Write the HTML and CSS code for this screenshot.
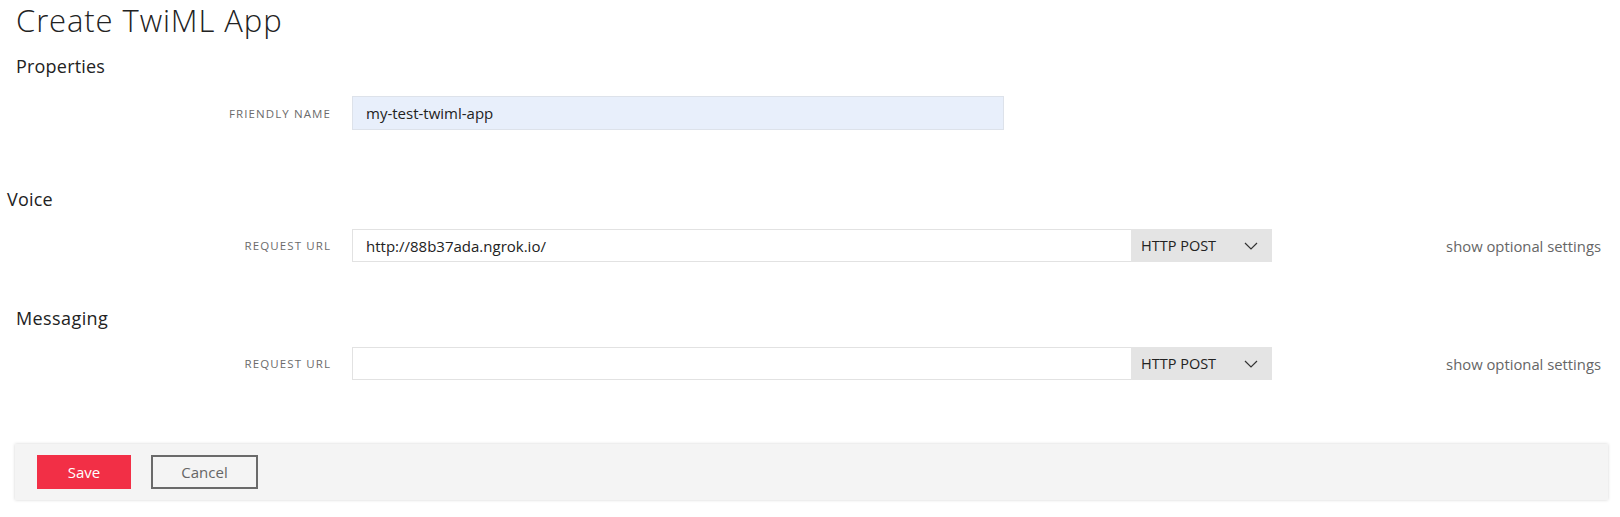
FILE: index.html
```html
<!DOCTYPE html>
<html>
<head>
<meta charset="utf-8">
<title>Create TwiML App</title>
<link rel="stylesheet" href="styles.css">
</head>
<body>
<div class="page">
  <h1 class="title">Create TwiML App</h1>

  <h2 class="section-title sec-properties">Properties</h2>
  <div class="row row-friendly">
    <label class="label">FRIENDLY NAME</label>
    <div class="field field-name">my-test-twiml-app</div>
  </div>

  <h2 class="section-title sec-voice">Voice</h2>
  <div class="row row-voice">
    <label class="label">REQUEST URL</label>
    <div class="url-group">
      <div class="field field-url">http://88b37ada.ngrok.io/</div>
      <div class="select">
        <span>HTTP POST</span>
        <svg class="chev" width="14" height="8" viewBox="0 0 14 8"><path d="M1 1 L7 7 L13 1" fill="none" stroke="#333" stroke-width="1.2"/></svg>
      </div>
    </div>
    <a class="optional">show optional settings</a>
  </div>

  <h2 class="section-title sec-messaging">Messaging</h2>
  <div class="row row-messaging">
    <label class="label">REQUEST URL</label>
    <div class="url-group">
      <div class="field field-url"></div>
      <div class="select">
        <span>HTTP POST</span>
        <svg class="chev" width="14" height="8" viewBox="0 0 14 8"><path d="M1 1 L7 7 L13 1" fill="none" stroke="#333" stroke-width="1.2"/></svg>
      </div>
    </div>
    <a class="optional">show optional settings</a>
  </div>

  <div class="footer">
    <button class="btn btn-save">Save</button>
    <button class="btn btn-cancel">Cancel</button>
  </div>
</div>
</body>
</html>
```

FILE: styles.css
```css
* { box-sizing: border-box; }
html, body { margin: 0; padding: 0; background: #fff; }
body {
  font-family: "Open Sans", "Noto Sans", sans-serif;
  color: #222;
  width: 1620px;
  height: 517px;
  overflow: hidden;
}
.page { display: flex; flex-direction: column; }

.title {
  margin: 0;
  padding-left: 16px;
  font-size: 31px;
  line-height: 40px;
  font-weight: 300;
  color: #222;
  letter-spacing: 0.9px;
}

.section-title {
  margin: 0;
  font-size: 18px;
  line-height: 24px;
  font-weight: 400;
  color: #222;
  letter-spacing: 0.2px;
}
.sec-properties { margin-top: 14px; padding-left: 16px; }
.sec-voice { margin-top: 57px; padding-left: 7px; }
.sec-messaging { margin-top: 44px; padding-left: 16px; letter-spacing: 0.4px; }

.row {
  display: grid;
  grid-template-columns: 331px auto 1fr;
  column-gap: 21px;
  align-items: center;
  height: 34px;
}
.row-friendly { margin-top: 18px; }
.row-voice { margin-top: 18px; height: 33px; }
.row-messaging { margin-top: 17px; height: 33px; }

.label {
  justify-self: end;
  font-size: 11.5px;
  letter-spacing: 1.1px;
  color: #6b6b6b;
}

.field {
  height: 100%;
  display: flex;
  align-items: center;
  padding-left: 13px;
  font-size: 15px;
  color: #222;
}
.field-name {
  width: 652px;
  background: #e8effb;
  border: 1px solid #dde2ea;
}
.url-group {
  display: flex;
  height: 100%;
}
.field-url {
  width: 779px;
  border: 1px solid #e2e2e2;
  border-right: none;
  background: #fff;
}
.select {
  width: 141px;
  height: 100%;
  background: #e4e4e4;
  display: flex;
  align-items: center;
  justify-content: space-between;
  padding: 0 14px 0 10px;
  font-size: 14.5px;
  color: #222;
}
.chev { display: block; }

.optional {
  justify-self: end;
  margin-right: 19px;
  font-size: 14.8px;
  color: #666;
}

.footer {
  margin: 64px 12px 0 15px;
  height: 56px;
  background: #f4f4f4;
  box-shadow: 0 0 3px rgba(0,0,0,0.18);
  display: flex;
  align-items: center;
  gap: 20px;
  padding-left: 22px;
}
.btn {
  height: 34px;
  font-family: "Open Sans", "Noto Sans", sans-serif;
  font-size: 15px;
  border-radius: 0;
  cursor: pointer;
}
.btn-save {
  width: 94px;
  background: #f22f46;
  color: #fff;
  border: none;
}
.btn-cancel {
  width: 107px;
  background: transparent;
  color: #666;
  border: 2px solid #6a6a6a;
}
```
